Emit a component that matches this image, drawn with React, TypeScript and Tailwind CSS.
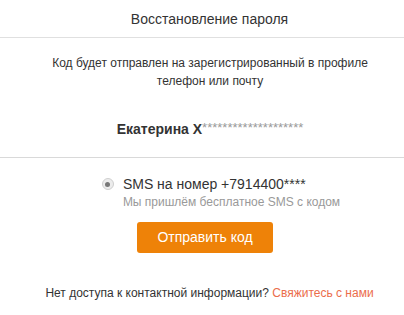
export default function App() {
  return (
    <div className="w-[404px] h-[315px] bg-white text-[#333] overflow-hidden font-['Liberation_Sans',Arial,sans-serif]">
      <div className="h-[38px] border-b border-[#e0e0e0] flex items-center justify-center pl-[15px] pt-[2px] text-[14px] text-[#333]">
        Восстановление пароля
      </div>
      <div className="pt-[16px] pl-[46px] pr-[30px] text-center text-[12px] leading-[18px] text-[#333]">
        Код будет отправлен на зарегистрированный в профиле телефон или почту
      </div>
      <div className="h-[68px] border-b border-[#d9d9d9] flex items-center justify-center pt-[11px] pl-[16px]">
        <span className="font-bold text-[14px] text-[#333]">Екатерина Х</span>
        <span className="text-[13px] text-[#999] -mt-[2px]">********************</span>
      </div>
      <div className="flex justify-center pt-[17px] pl-[38px]">
        <div className="flex items-start gap-[9px]">
          <div className="mt-[3px] w-[12px] h-[12px] rounded-full border border-[#cfcfcf] bg-[#ececec] flex items-center justify-center">
            <div className="w-[5px] h-[5px] rounded-full bg-[#777]" />
          </div>
          <div>
            <div className="text-[14px] leading-[18px] text-[#333]">SMS на номер +7914400****</div>
            <div className="text-[12px] leading-[18px] text-[#999]">Мы пришлём бесплатное SMS с кодом</div>
          </div>
        </div>
      </div>
      <div className="flex justify-center pt-[11px] pl-[6px]">
        <button className="w-[136px] h-[31px] rounded-[3px] bg-[#ee8208] text-white text-[14px]">Отправить код</button>
      </div>
      <div className="text-center text-[12px] text-[#333] pt-[31px] pl-[15px]">
        Нет доступа к контактной информации? <span className="text-[#eb6d4b]">Свяжитесь с нами</span>
      </div>
    </div>
  );
}
